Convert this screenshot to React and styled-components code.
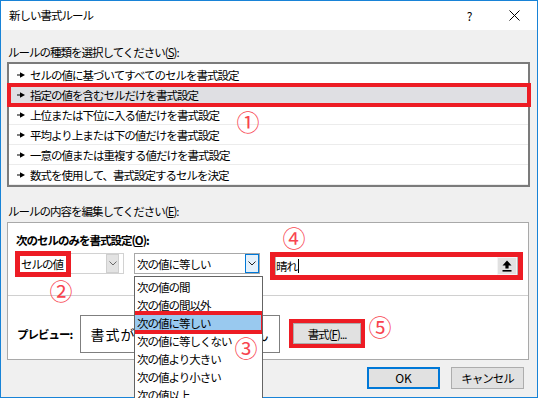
import React from "react";
import styled, { createGlobalStyle } from "styled-components";

const Global = createGlobalStyle`
  html, body { margin: 0; padding: 0; overflow: hidden; background: #ffffff; }
  body {
    font-family: "Noto Sans CJK JP", "Noto Sans", sans-serif;
    font-size: 11.5px;
    letter-spacing: -1px;
    color: #000;
  }
`;

const Window = styled.div`
  position: relative;
  width: 538px;
  height: 398px;
  box-sizing: border-box;
  border: 1px solid #1883d7;
  background: #f0f0f0;
  display: flex;
  flex-direction: column;
`;

const TitleBar = styled.div`
  height: 29px;
  background: #fff;
  display: flex;
  align-items: center;
  padding-left: 8px;
  flex-shrink: 0;
`;

const TitleText = styled.span`
  line-height: 16px;
  margin-top: -1px;
`;

const TitleBtn = styled.div`
  width: 45px;
  height: 29px;
  display: flex;
  align-items: center;
  justify-content: center;
  font-size: 12px;
  letter-spacing: 0;
  margin-left: ${(p) => (p.$first ? "auto" : "0")};
`;

const Body = styled.div`
  display: flex;
  flex-direction: column;
  padding-left: 6px;
`;

const Label = styled.div`
  line-height: 16px;
  margin-top: ${(p) => p.$mt}px;
  padding-left: 1px;
`;

const U = styled.span`
  text-decoration: underline;
  text-underline-offset: 1px;
`;

const RuleList = styled.div`
  width: 523px;
  box-sizing: border-box;
  border: 2px solid #7b7b7b;
  background: #fff;
  margin-top: 2px;
  padding-top: 1px;
  display: flex;
  flex-direction: column;
`;

const RuleRow = styled.div`
  position: relative;
  height: 20px;
  box-sizing: border-box;
  border-bottom: 1px solid #ececec;
  display: flex;
  align-items: center;
  padding-left: 8px;
  gap: 5px;
  background: ${(p) => (p.$selected ? "#dfdfe3" : "#fff")};
  line-height: 16px;
`;

const RedBox = styled.div`
  position: absolute;
  inset: ${(p) => p.$inset};
  border: ${(p) => p.$t || 4}px solid #ed1c24;
  pointer-events: none;
  z-index: 3;
`;

const CellRedBox = styled(RedBox)`
  width: 56px;
  height: 26px;
  box-sizing: border-box;
`;

const Panel = styled.div`
  width: 522px;
  box-sizing: border-box;
  margin-top: 3px;
  border: 1px solid #a9a9a9;
  background: #fff;
  display: flex;
  flex-direction: column;
`;

const TopSection = styled.div`
  height: 73px;
  box-sizing: border-box;
  border-bottom: 1px solid #d0d0d0;
  padding: 9px 0 0 7px;
  display: flex;
  flex-direction: column;
`;

const BoldLabel = styled.div`
  font-weight: 700;
  line-height: 16px;
  padding-left: 1px;
`;

const ComboRow = styled.div`
  display: flex;
  align-items: flex-start;
  margin-top: 5px;
`;

const Combo = styled.div`
  position: relative;
  width: ${(p) => p.$w}px;
  height: 21px;
  box-sizing: border-box;
  border: 1px solid ${(p) => (p.$open ? "#a8a8a8" : "#d2d2d2")};
  background: #fff;
  display: flex;
  align-items: center;
  margin-left: ${(p) => p.$ml || 0}px;
  padding-left: ${(p) => p.$pl}px;
  padding-right: ${(p) => p.$pr}px;
  line-height: 16px;
`;

const ComboBtn = styled.div`
  margin-left: auto;
  width: ${(p) => (p.$open ? 14 : 13)}px;
  height: 19px;
  box-sizing: border-box;
  border: 1px solid ${(p) => (p.$open ? "#0078d7" : "#cfcfcf")};
  background: ${(p) => (p.$open ? "#e5f1fb" : "#e3e3e3")};
  display: flex;
  align-items: center;
  justify-content: center;
  color: ${(p) => (p.$open ? "#222" : "#6a6a6a")};
`;

const DropList = styled.div`
  position: absolute;
  top: 22px;
  left: -1px;
  width: 129px;
  height: 124px;
  overflow: hidden;
  box-sizing: border-box;
  border: 1px solid #646464;
  border-bottom: none;
  background: #fff;
  padding-top: 1px;
  z-index: 4;
  display: flex;
  flex-direction: column;
`;

const DropItem = styled.div`
  position: relative;
  height: 18px;
  flex-shrink: 0;
  box-sizing: border-box;
  display: flex;
  align-items: center;
  padding-left: 2px;
  line-height: 16px;
  background: ${(p) => (p.$selected ? "#99c9ef" : "#fff")};
  border-bottom: 1px ${(p) => (p.$selected ? "dotted #222" : "solid transparent")};
`;

const ValueInput = styled.div`
  position: relative;
  width: 243px;
  height: 20px;
  box-sizing: border-box;
  border: 1px solid #b5b5b5;
  background: #fff;
  margin-left: 15px;
  margin-top: 3px;
  display: flex;
  align-items: center;
  line-height: 16px;
`;

const Caret = styled.span`
  width: 1px;
  height: 14px;
  background: #000;
  margin-left: 1px;
`;

const UploadBtn = styled.div`
  margin-left: auto;
  width: 20px;
  height: 18px;
  box-sizing: border-box;
  border: 1px solid #f4f4f4;
  background: #e1e1e1;
  display: flex;
  align-items: center;
  justify-content: center;
`;

const BottomSection = styled.div`
  height: 63px;
  box-sizing: border-box;
  padding: 19px 0 0 9px;
  display: flex;
  align-items: flex-start;
`;

const PreviewLabel = styled.div`
  width: 63px;
  height: 38px;
  display: flex;
  align-items: center;
  font-weight: 700;
  line-height: 16px;
`;

const PreviewBox = styled.div`
  width: 200px;
  height: 38px;
  box-sizing: border-box;
  border: 1px solid #7f7f7f;
  display: flex;
  align-items: center;
  justify-content: center;
  font-size: 14px;
  letter-spacing: 1px;
  line-height: 18px;
`;

const Button = styled.div`
  position: relative;
  width: ${(p) => p.$w}px;
  height: ${(p) => p.$h}px;
  box-sizing: border-box;
  border: ${(p) => (p.$default ? "2px solid #0078d7" : "1px solid #adadad")};
  background: #e1e1e1;
  display: flex;
  align-items: center;
  justify-content: center;
  line-height: 16px;
  margin-left: ${(p) => p.$ml || 0}px;
  margin-top: ${(p) => p.$mt || 0}px;
  letter-spacing: ${(p) => (p.$latin ? "0" : "-1px")};
  font-size: ${(p) => (p.$latin ? "12px" : "11.5px")};
`;

const ButtonRow = styled.div`
  display: flex;
  justify-content: flex-end;
  gap: 11px;
  margin-top: 7px;
  padding-right: 13px;
`;

const Marker = styled.div`
  position: absolute;
  left: ${(p) => p.$x - 12}px;
  top: ${(p) => p.$y - 12}px;
  width: 22px;
  height: 22px;
  display: flex;
  align-items: center;
  justify-content: center;
  font-size: 23px;
  line-height: 22px;
  letter-spacing: 0;
  color: #f8444f;
  z-index: 6;
`;

const Chevron = () => (
  <svg width="8" height="5" viewBox="0 0 8 5">
    <polyline points="0.5,0.5 4,4 7.5,0.5" fill="none" stroke="currentColor" strokeWidth="1" />
  </svg>
);

const RowArrow = () => (
  <svg width="8" height="6" viewBox="0 0 8 6">
    <path d="M0 2.4h4v1.2H0z M3 0.3L8 3 3 5.7z" fill="#000" />
  </svg>
);

const CloseIcon = () => (
  <svg width="11" height="11" viewBox="0 0 11 11">
    <path d="M0.5 0.5L10.5 10.5M10.5 0.5L0.5 10.5" stroke="#000" strokeWidth="1" />
  </svg>
);

const UploadIcon = () => (
  <svg width="10" height="12" viewBox="0 0 10 12">
    <path d="M5 0.5L9.5 5.5H6.6V8.5H3.4V5.5H0.5z" fill="#000" />
    <rect x="0.5" y="10" width="9" height="1.6" fill="#000" />
  </svg>
);

const rules = [
  "セルの値に基づいてすべてのセルを書式設定",
  "指定の値を含むセルだけを書式設定",
  "上位または下位に入る値だけを書式設定",
  "平均より上または下の値だけを書式設定",
  "一意の値または重複する値だけを書式設定",
  "数式を使用して、書式設定するセルを決定",
];

const ops = [
  "次の値の間",
  "次の値の間以外",
  "次の値に等しい",
  "次の値に等しくない",
  "次の値より大きい",
  "次の値より小さい",
  "次の値以上",
];

export default function App() {
  return (
    <>
      <Global />
      <Window>
        <TitleBar>
          <TitleText>新しい書式ルール</TitleText>
          <TitleBtn $first>?</TitleBtn>
          <TitleBtn>
            <CloseIcon />
          </TitleBtn>
        </TitleBar>
        <Body>
          <Label $mt={14}>
            ルールの種類を選択してください(<U>S</U>):
          </Label>
          <RuleList>
            {rules.map((r, i) => (
              <RuleRow key={r} $selected={i === 1}>
                <RowArrow />
                <span>{r}</span>
                {i === 1 && <RedBox $inset="-2px -3px -3px -2px" />}
              </RuleRow>
            ))}
          </RuleList>
          <Label $mt={16}>
            ルールの内容を編集してください(<U>E</U>):
          </Label>
          <Panel>
            <TopSection>
              <BoldLabel>
                次のセルのみを書式設定(<U>O</U>):
              </BoldLabel>
              <ComboRow>
                <Combo $w={109} $pl={5} $pr={4}>
                  <span>セルの値</span>
                  <ComboBtn>
                    <Chevron />
                  </ComboBtn>
                  <CellRedBox $t={5} $inset="-3px auto auto -1px" />
                </Combo>
                <Combo $w={126} $ml={10} $pl={2} $pr={0} $open>
                  <span>次の値に等しい</span>
                  <ComboBtn $open>
                    <Chevron />
                  </ComboBtn>
                  <DropList>
                    {ops.map((o, i) => (
                      <DropItem key={o} $selected={i === 2}>
                        {o}
                        {i === 2 && <RedBox $inset="-3px -3px -3px -4px" />}
                      </DropItem>
                    ))}
                  </DropList>
                </Combo>
                <ValueInput>
                  <span>晴れ</span>
                  <Caret />
                  <UploadBtn>
                    <UploadIcon />
                  </UploadBtn>
                  <RedBox $t={5} $inset="-5px -6px -5px -6px" />
                </ValueInput>
              </ComboRow>
            </TopSection>
            <BottomSection>
              <PreviewLabel>プレビュー:</PreviewLabel>
              <PreviewBox>書式が設定されていません</PreviewBox>
              <Button $w={68} $h={21} $ml={13} $mt={8}>
                書式(<U>F</U>)...
                <RedBox $inset="-5px -5px -5px -5px" />
              </Button>
            </BottomSection>
          </Panel>
          <ButtonRow>
            <Button $w={73} $h={22} $default $latin>
              OK
            </Button>
            <Button $w={73} $h={22}>
              キャンセル
            </Button>
          </ButtonRow>
        </Body>
        <Marker $x={248} $y={121}>①</Marker>
        <Marker $x={61} $y={290}>②</Marker>
        <Marker $x={246} $y={347}>③</Marker>
        <Marker $x={294} $y={237}>④</Marker>
        <Marker $x={380} $y={326}>⑤</Marker>
      </Window>
    </>
  );
}
